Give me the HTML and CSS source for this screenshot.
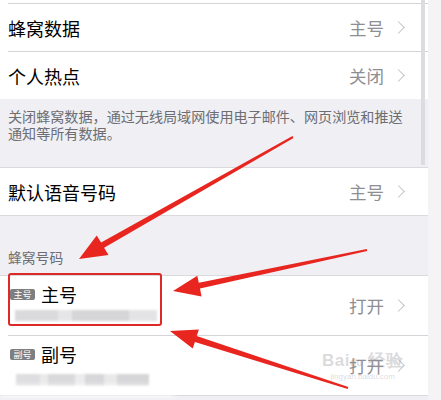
FILE: index.html
```html
<!DOCTYPE html>
<html lang="zh">
<head>
<meta charset="utf-8">
<link rel="stylesheet" href="styles.css">
</head>
<body>
<div class="screen">
  <div class="main">
    <div class="scrollbar"></div>
    <div class="group">
      <div class="sliver"></div>
      <div class="cell sep">
        <span class="title">蜂窝数据</span>
        <span class="value">主号</span>
        <span class="chev"></span>
      </div>
      <div class="cell sep">
        <span class="title">个人热点</span>
        <span class="value">关闭</span>
        <span class="chev"></span>
      </div>
    </div>
    <div class="footer">关闭蜂窝数据，通过无线局域网使用电子邮件、网页浏览和推送<br>通知等所有数据。</div>
    <div class="group framed">
      <div class="cell">
        <span class="title">默认语音号码</span>
        <span class="value">主号</span>
        <span class="chev"></span>
      </div>
    </div>
    <div class="header">蜂窝号码</div>
    <div class="group framed">
      <div class="cell tall">
        <div class="line-info">
          <div class="line-name"><span class="badge">主号</span><span class="title">主号</span></div>
          <div class="blur-num blur-a"></div>
        </div>
        <span class="value">打开</span>
        <span class="chev"></span>
      </div>
      <div class="cell tall sep">
        <div class="line-info">
          <div class="line-name"><span class="badge">副号</span><span class="title">副号</span></div>
          <div class="blur-num blur-b"></div>
        </div>
        <span class="value">打开</span>
        <span class="chev"></span>
      </div>
    </div>
  </div>
  <div class="strip"></div>

  <div class="highlight"></div>
  <div class="whiteout"></div>
  <div class="watermark">
    <div class="wm-logo">Bai<span class="paw">du</span> 经验</div>
    <div class="wm-url">jingyan.baidu.com</div>
  </div>
  <svg class="arrows" width="441" height="400" viewBox="0 0 441 400">
    <polygon points="292.5,136.1 101.1,242.6 96.7,235.5 79,259 108.5,254.9 104.1,247.8 293.5,137.9"/>
    <polygon points="366.8,249 198.8,282.7 197.3,275.8 173,291 201.5,296.4 200.0,288.5 367.2,251"/>
    <polygon points="348.3,387 196.7,336.1 198.9,329.5 170,331 192.7,348.5 194.9,341.9 347.7,389"/>
  </svg>
</div>
</body>
</html>
```
FILE: styles.css
```css
* { box-sizing: border-box; }
html, body { margin: 0; padding: 0; }
body {
  width: 441px;
  height: 400px;
  overflow: hidden;
  font-family: "Noto Sans CJK SC", "Noto Sans", sans-serif;
  background: #efeff4;
}
.screen {
  position: relative;
  display: flex;
  width: 441px;
  height: 400px;
}
.main {
  position: relative;
  width: 428px;
  background: #efeff4;
}
.strip {
  flex: 1;
  background: #f4f4f6;
}
.scrollbar {
  position: absolute;
  left: 421px;
  top: 0;
  width: 4px;
  height: 165px;
  background: #dcdce0;
  z-index: 2;
}
.group {
  background: #fff;
}
.group.framed {
  border-top: 1px solid #d9d9de;
  border-bottom: 1px solid #d9d9de;
}
.sliver { height: 3px; }
.cell {
  position: relative;
  display: flex;
  align-items: center;
  height: 47px;
  padding: 0 22px 0 8px;
}
.cell.sep::before {
  content: "";
  position: absolute;
  left: 8px;
  right: 0;
  top: -1px;
  height: 1px;
  background: #d3d3d8;
}
.group > .cell.sep { margin-top: 1px; }
.title {
  font-size: 18px;
  color: #000;
  line-height: 22px;
}
.value {
  margin-left: auto;
  font-size: 17.5px;
  color: #8e8e93;
  line-height: 22px;
}
.chev {
  width: 9px;
  height: 9px;
  margin-left: 10px;
  margin-right: 3px;
  border-top: 1.6px solid #c4c4c9;
  border-right: 1.6px solid #c4c4c9;
  transform: rotate(45deg);
}
.footer {
  height: 68px;
  padding: 9px 0 0 8px;
  font-size: 14.1px;
  line-height: 17px;
  color: #6d6d72;
  white-space: nowrap;
}
.header {
  height: 59px;
  padding: 33px 0 0 8px;
  font-size: 13.8px;
  line-height: 16px;
  color: #6d6d72;
}
.cell.tall {
  height: 59px;
}
.line-info {
  display: flex;
  flex-direction: column;
  align-self: stretch;
  padding-top: 7px;
}
.line-name {
  display: flex;
  align-items: center;
  gap: 6px;
}
.badge {
  display: inline-block;
  margin-left: 2px;
  width: 25px;
  height: 11px;
  border-radius: 2px;
  background: #7f7f82;
  color: #fff;
  font-size: 9px;
  line-height: 11px;
  text-align: center;
}
.blur-num {
  margin-top: 5px;
  height: 11px;
  filter: blur(1.2px);
}
.blur-a {
  width: 142px;
  margin-left: 7px;
  background: linear-gradient(90deg, #dadadc 0 30%, #e6e6e8 30% 40%, #d6d6d8 40% 80%, #e4e4e6 80% 100%);
}
.blur-b {
  width: 133px;
  margin-left: 8px;
  margin-top: 9px;
  height: 12px;
  background: linear-gradient(90deg, #dedee0 0 18%, #eaeaeb 18% 24%, #d9d9db 24% 44%, #ececed 44% 52%, #d7d7d9 52% 66%, #e9e9ea 66% 76%, #d6d6d8 76% 100%);
}
.highlight {
  position: absolute;
  left: 8px;
  top: 273px;
  width: 154px;
  height: 53px;
  border: 2.5px solid #dd2a26;
  border-radius: 3px;
}
.whiteout {
  position: absolute;
  left: 0;
  top: 386px;
  width: 175px;
  height: 10px;
  background: #fff;
  filter: blur(3px);
}
.watermark {
  position: absolute;
  left: 322px;
  top: 352px;
  color: rgba(150, 150, 155, 0.35);
  font-family: "Liberation Sans", sans-serif;
  text-align: center;
}
.wm-logo {
  font-size: 17px;
  font-weight: bold;
  line-height: 18px;
  letter-spacing: 0.5px;
}
.paw {
  font-size: 10px;
}
.wm-url {
  font-size: 8px;
  line-height: 10px;
}
.arrows {
  position: absolute;
  left: 0;
  top: 0;
  fill: #e8261f;
  pointer-events: none;
}
```
